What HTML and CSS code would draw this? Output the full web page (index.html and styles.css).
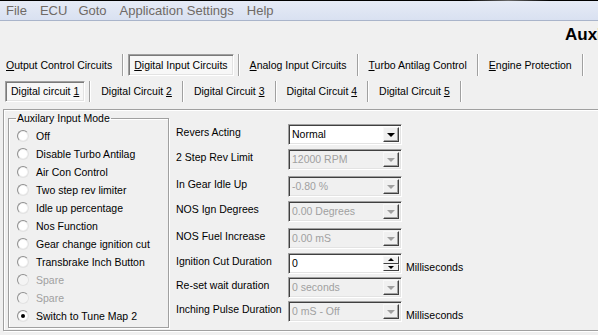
FILE: index.html
```html
<!DOCTYPE html>
<html lang="en">
<head>
    <meta charset="UTF-8">
    <title>Auxilary Input</title>
    <link rel="stylesheet" href="styles.css">
</head>
<body>
<div class="topline"></div>
<ul class="menubar">
    <li>File</li>
    <li>ECU</li>
    <li>Goto</li>
    <li>Application Settings</li>
    <li>Help</li>
</ul>
<div class="heading">Auxilary Input Configuration</div>

<div class="tabs outer">
    <span class="tab"><u>O</u>utput Control Circuits</span>
    <span class="sep"></span>
    <span class="tab cur"><u>D</u>igital Input Circuits</span>
    <span class="sep"></span>
    <span class="tab"><u>A</u>nalog Input Circuits</span>
    <span class="sep"></span>
    <span class="tab"><u>T</u>urbo Antilag Control</span>
    <span class="sep"></span>
    <span class="tab"><u>E</u>ngine Protection</span>
    <span class="sep"></span>
</div>
<div class="tabs inner">
    <span class="tab cur">Digital circuit <u>1</u></span>
    <span class="sep"></span>
    <span class="tab">Digital Circuit <u>2</u></span>
    <span class="sep"></span>
    <span class="tab">Digital Circuit <u>3</u></span>
    <span class="sep"></span>
    <span class="tab">Digital Circuit <u>4</u></span>
    <span class="sep"></span>
    <span class="tab">Digital Circuit <u>5</u></span>
    <span class="sep"></span>
</div>

<div class="page">
    <fieldset class="mode">
        <legend>Auxilary Input Mode</legend>
        <div class="opts">
            <label class="opt"><span class="radio"></span>Off</label>
            <label class="opt"><span class="radio"></span>Disable Turbo Antilag</label>
            <label class="opt"><span class="radio"></span>Air Con Control</label>
            <label class="opt"><span class="radio"></span>Two step rev limiter</label>
            <label class="opt"><span class="radio"></span>Idle up percentage</label>
            <label class="opt"><span class="radio"></span>Nos Function</label>
            <label class="opt"><span class="radio"></span>Gear change ignition cut</label>
            <label class="opt"><span class="radio"></span>Transbrake Inch Button</label>
            <label class="opt off"><span class="radio"></span>Spare</label>
            <label class="opt off"><span class="radio"></span>Spare</label>
            <label class="opt"><span class="radio on"></span>Switch to Tune Map 2</label>
        </div>
    </fieldset>

    <div class="settings">
        <div class="row g4">
            <span class="lbl">Revers Acting</span>
            <div class="combo"><span class="val">Normal</span><span class="btn"><i class="arrow"></i></span></div>
        </div>
        <div class="row g6">
            <span class="lbl">2 Step Rev Limit</span>
            <div class="combo dis"><span class="val">12000 RPM</span><span class="btn"><i class="arrow"></i></span></div>
        </div>
        <div class="row g4">
            <span class="lbl">In Gear Idle Up</span>
            <div class="combo dis"><span class="val">-0.80 %</span><span class="btn"><i class="arrow"></i></span></div>
        </div>
        <div class="row g6">
            <span class="lbl">NOS Ign Degrees</span>
            <div class="combo dis"><span class="val">0.00 Degrees</span><span class="btn"><i class="arrow"></i></span></div>
        </div>
        <div class="row g4">
            <span class="lbl">NOS Fuel Increase</span>
            <div class="combo dis"><span class="val">0.00 mS</span><span class="btn"><i class="arrow"></i></span></div>
        </div>
        <div class="row g3">
            <span class="lbl">Ignition Cut Duration</span>
            <div class="combo"><span class="val">0</span><span class="spin"><i class="up"></i><i class="down"></i></span></div>
            <span class="unit">Milliseconds</span>
        </div>
        <div class="row g3">
            <span class="lbl">Re-set wait duration</span>
            <div class="combo dis"><span class="val">0 seconds</span><span class="btn"><i class="arrow"></i></span></div>
        </div>
        <div class="row">
            <span class="lbl">Inching Pulse Duration</span>
            <div class="combo dis"><span class="val">0 mS - Off</span><span class="btn"><i class="arrow"></i></span></div>
            <span class="unit">Milliseconds</span>
        </div>
    </div>
</div>
</body>
</html>
```

FILE: styles.css
```css
* {
    margin: 0;
    padding: 0;
    list-style: none;
    box-sizing: border-box;
}

body {
    width: 598px;
    height: 335px;
    overflow: hidden;
    background: #f0f0f0;
    font: 10.5px "Liberation Sans", Arial, sans-serif;
    color: #000;
}

u {
    text-decoration: underline;
    text-underline-offset: 1px;
}

.topline {
    height: 1px;
    background: linear-gradient(to right, #000 0, #000 78%, #6a6a6a 85%, #000 92%);
}

.menubar {
    display: flex;
    height: 20px;
    padding-left: 6px;
    gap: 13px;
    background: linear-gradient(#e6ebf6, #d9e1f1);
    border-bottom: 1px solid #a9b4ca;
    font: 13px/19px "Liberation Sans", Arial, sans-serif;
    color: #6f6a66;
}

.menubar li:nth-child(3) {
    margin-left: -2px;
}

.heading {
    margin: 4px 0 9px 565px;
    height: 20px;
    overflow: hidden;
    white-space: nowrap;
    font: bold 17px/20px "Liberation Sans", Arial, sans-serif;
}

.tabs {
    display: flex;
    align-items: stretch;
    white-space: nowrap;
}

.tabs.outer {
    height: 22px;
}

.tabs.outer .tab {
    line-height: 20px;
}

.tabs.inner {
    height: 21px;
    margin: 5px 0 7px 5px;
}

.tabs.inner .tab {
    line-height: 19px;
}

.tab {
    display: block;
    padding: 0 5px;
    border: 1px solid transparent;
}

.tab.cur {
    background: #f7f7f7;
    border-color: #a0a0a0 #ffffff #ffffff #a0a0a0;
    box-shadow: inset 1px 1px 0 #7a7a7a, inset -1px -1px 0 #e3e3e3;
}

.sep {
    width: 2px;
    margin: 0 4px;
    border-left: 1px solid #a0a0a0;
    border-right: 1px solid #fff;
}

.page {
    display: flex;
    width: 620px;
    height: 222px;
    margin-left: 3px;
    padding: 2px 0 2px 4px;
    border: 1px solid #a0a0a0;
    box-shadow: 1px 1px 0 #fff, inset 1px 1px 0 #fff;
}

.mode {
    width: 161px;
    padding: 0 0 0 7px;
    border: 1px solid #a0a0a0;
    box-shadow: inset 1px 1px 0 #fff, 1px 1px 0 #fff;
    min-width: 0;
}

.mode legend {
    padding: 0 1px;
    line-height: 13px;
}

.opts {
    padding-top: 2px;
}

.opt {
    display: flex;
    align-items: center;
    height: 18px;
}

.opt.off {
    color: #a0a0a0;
}

.radio {
    position: relative;
    width: 12px;
    height: 12px;
    margin: 0 7px 0 1px;
    border-radius: 50%;
    border: 1px solid;
    border-color: #8f8f8f #e2e2e2 #e2e2e2 #8f8f8f;
    background: radial-gradient(circle, #ffffff 50%, #e4e4e4 80%);
}

.opt.off .radio {
    background: #f4f4f4;
}

.radio.on::after {
    content: "";
    position: absolute;
    left: 3px;
    top: 3px;
    width: 4px;
    height: 4px;
    border-radius: 50%;
    background: #000;
}

.settings {
    padding: 12px 0 0 7px;
}

.row {
    display: flex;
    align-items: center;
    height: 21px;
}

.row.g3 { margin-bottom: 3px; }
.row.g4 { margin-bottom: 4px; }
.row.g6 { margin-bottom: 6px; }

.lbl {
    width: 112px;
    white-space: nowrap;
    margin-top: -5px;
}

.combo {
    display: flex;
    width: 114px;
    height: 21px;
    border: 1px solid;
    border-color: #a0a0a0 #ffffff #ffffff #a0a0a0;
    box-shadow: inset 1px 1px 0 #404040, inset -1px -1px 0 #e3e3e3;
    background: #fff;
    padding: 2px;
}

.combo.dis {
    background: #f0f0f0;
    color: #a0a0a0;
}

.val {
    flex: 1;
    padding-left: 1px;
    line-height: 15px;
}

.btn {
    display: flex;
    align-items: center;
    justify-content: center;
    width: 16px;
    background: #f0f0f0;
    border: 1px solid;
    border-color: #f8f8f8 #404040 #404040 #f8f8f8;
    box-shadow: inset -1px -1px 0 #a0a0a0;
}

.arrow {
    width: 0;
    height: 0;
    border-left: 4px solid transparent;
    border-right: 4px solid transparent;
    border-top: 4px solid #000;
}

.dis .arrow {
    border-top-color: #a0a0a0;
}

.spin {
    display: flex;
    flex-direction: column;
    width: 16px;
}

.spin i {
    flex: 1;
    display: flex;
    align-items: center;
    justify-content: center;
    background: #f0f0f0;
    border: 1px solid;
    border-color: #f8f8f8 #404040 #404040 #f8f8f8;
}

.spin i::after {
    content: "";
    border-left: 3px solid transparent;
    border-right: 3px solid transparent;
}

.spin .up::after {
    border-bottom: 3px solid #000;
}

.spin .down::after {
    border-top: 3px solid #000;
}

.unit {
    margin: 6px 0 0 4px;
}
```
